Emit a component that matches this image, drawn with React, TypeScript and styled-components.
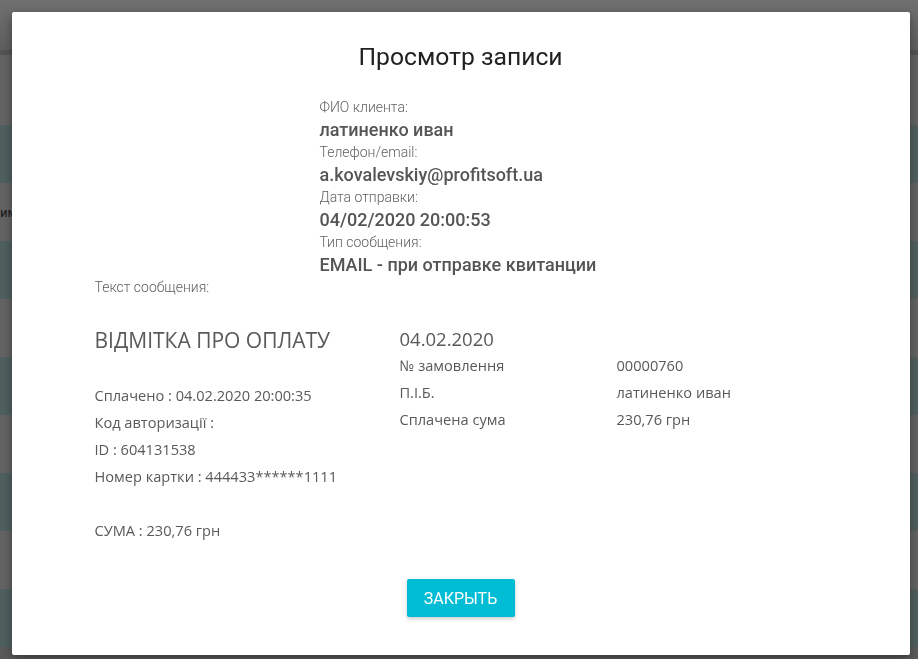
import * as React from 'react'
import styled, { createGlobalStyle } from 'styled-components'

const GlobalStyle = createGlobalStyle`
  html, body {
    margin: 0;
    padding: 0;
    height: 100%;
    overflow: hidden;
    background: #5a5a5a;
  }
  #root {
    height: 100%;
  }
  * {
    box-sizing: border-box;
  }
`

// page behind the dimmed overlay
const Page = styled.div`
  height: 100%;
  display: flex;
  flex-direction: column;
`
const TopBar = styled.div`
  height: 55px;
  flex-shrink: 0;
  background: linear-gradient(#6f6f6f, #5e5e5e);
  border-bottom: 5px solid #535353;
`
const Row = styled.div<{ $teal?: boolean }>`
  height: 58px;
  flex-shrink: 0;
  display: flex;
  align-items: center;
  background: ${p => (p.$teal ? '#4f5f5e' : '#626262')};
  font-family: Roboto, sans-serif;
  font-size: 13px;
  color: #1a1a1a;
`

const Overlay = styled.div`
  position: fixed;
  inset: 0;
  display: flex;
  justify-content: center;
  padding: 12px 0 0 3px;
`
const Modal = styled.div`
  width: 898px;
  height: 643px;
  background: #fff;
  border-radius: 2px;
  box-shadow: 0 4px 10px rgba(0, 0, 0, 0.35);
  display: flex;
  flex-direction: column;
  font-family: Roboto, sans-serif;
`
const Title = styled.h2`
  margin: 30px 0 0;
  text-align: center;
  font-size: 24.7px;
  line-height: 30px;
  font-weight: 400;
  color: #212121;
`
const Info = styled.div`
  margin: 25px 0 0 308px;
  display: flex;
  flex-direction: column;
`
const Label = styled.div`
  font-size: 14px;
  line-height: 20px;
  font-weight: 300;
  color: #616161;
`
const Value = styled.div`
  font-size: 18px;
  line-height: 25px;
  font-weight: 500;
  color: #555;
`
const MessageLabel = styled(Label)`
  margin-left: 83px;
`

// email body
const Letter = styled.div`
  margin: 29px 0 0 83px;
  display: grid;
  grid-template-columns: 305px 1fr;
  font-family: 'Open Sans', sans-serif;
  color: #595959;
`
const Column = styled.div`
  display: flex;
  flex-direction: column;
`
const Heading = styled.div`
  font-size: 21px;
  line-height: 28px;
  margin-bottom: 28px;
`
const Line = styled.div<{ $gap?: boolean }>`
  font-size: 14.6px;
  line-height: 27px;
  margin-top: ${p => (p.$gap ? '27px' : '0')};
`
const DateTitle = styled.div`
  font-size: 18.5px;
  line-height: 26px;
`
const OrderTable = styled.div`
  display: grid;
  grid-template-columns: 217px 1fr;
  font-size: 14.6px;
  line-height: 27px;
`

const Footer = styled.div`
  margin-top: 35px;
  display: flex;
  justify-content: center;
`
const CloseButton = styled.button`
  width: 108px;
  height: 38px;
  border: none;
  border-radius: 2px;
  background: #00bcd4;
  color: #fff;
  font-family: Roboto, sans-serif;
  font-size: 16px;
  font-weight: 400;
  text-transform: uppercase;
  box-shadow: 0 2px 4px rgba(0, 0, 0, 0.2);
  cursor: pointer;
`

const info = [
  ['ФИО клиента:', 'латиненко иван'],
  ['Телефон/email:', 'a.kovalevskiy@profitsoft.ua'],
  ['Дата отправки:', '04/02/2020 20:00:53'],
  ['Тип сообщения:', 'EMAIL - при отправке квитанции'],
]

const order = [
  ['№ замовлення', '00000760'],
  ['П.І.Б.', 'латиненко иван'],
  ['Сплачена сума', '230,76 грн'],
]

export default function App() {
  const rows = [true, false, true, false, true, false, true, false, true]
  return (
    <>
      <GlobalStyle />
      <Page>
        <TopBar />
        <Row style={{ height: 70 }} />
        {rows.map((teal, i) => (
          <Row key={i} $teal={teal}>{i === 1 ? 'им' : ''}</Row>
        ))}
      </Page>
      <Overlay>
        <Modal>
          <Title>Просмотр записи</Title>
          <Info>
            {info.map(([label, value]) => (
              <React.Fragment key={label}>
                <Label>{label}</Label>
                <Value>{value}</Value>
              </React.Fragment>
            ))}
          </Info>
          <MessageLabel>Текст сообщения:</MessageLabel>
          <Letter>
            <Column>
              <Heading>ВІДМІТКА ПРО ОПЛАТУ</Heading>
              <Line>Сплачено : 04.02.2020 20:00:35</Line>
              <Line>Код авторизації :</Line>
              <Line>ID : 604131538</Line>
              <Line>Номер картки : 444433******1111</Line>
              <Line $gap>СУМА : 230,76 грн</Line>
            </Column>
            <Column>
              <DateTitle>04.02.2020</DateTitle>
              <OrderTable>
                {order.map(([k, v]) => (
                  <React.Fragment key={k}>
                    <div>{k}</div>
                    <div>{v}</div>
                  </React.Fragment>
                ))}
              </OrderTable>
            </Column>
          </Letter>
          <Footer>
            <CloseButton>Закрыть</CloseButton>
          </Footer>
        </Modal>
      </Overlay>
    </>
  )
}
